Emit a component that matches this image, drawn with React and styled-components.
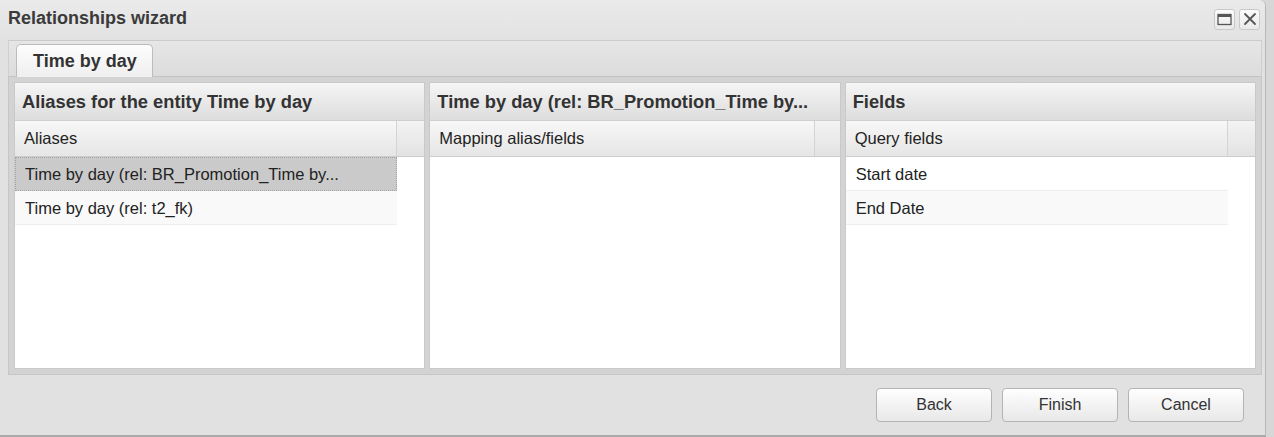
import React from "react";
import styled, { createGlobalStyle } from "styled-components";

const Global = createGlobalStyle`
  html, body { margin: 0; padding: 0; background: #d7d7d7; }
  body { font-family: "Liberation Sans", Arial, sans-serif; }
  * { box-sizing: border-box; }
`;

const Page = styled.div`
  display: flex;
  width: 1274px;
  height: 437px;
  overflow: hidden;
  background: #d7d7d7;
`;

const Window = styled.div`
  width: 1266px;
  height: 437px;
  display: flex;
  flex-direction: column;
  background: #e2e1e2;
  border-right: 1px solid #b7b7b7;
  border-bottom: 2px solid #a9a9a9;
  border-top-right-radius: 6px;
`;

const TitleBar = styled.div`
  height: 40px;
  display: flex;
  align-items: center;
  justify-content: space-between;
  padding: 0 5px 0 8px;
  background: linear-gradient(#eaeaea, #e2e2e2);
  border-top-right-radius: 6px;
`;

const Title = styled.span`
  font-weight: bold;
  font-size: 18px;
  color: #3a3a3a;
  margin-top: -4px;
`;

const Tools = styled.div`
  display: flex;
  gap: 4px;
  margin-top: -2px;
`;

const ToolButton = styled.div`
  width: 21px;
  height: 21px;
  border: 1px solid #c9c9c9;
  border-radius: 3px;
  background: linear-gradient(#fbfbfb, #e9e9e9);
  display: flex;
  align-items: center;
  justify-content: center;
`;

const Body = styled.div`
  display: flex;
  flex-direction: column;
  padding: 0 3px 0 8px;
`;

const TabStrip = styled.div`
  height: 37px;
  display: flex;
  align-items: flex-end;
  padding: 0 0 0 7px;
  border-top: 1px solid #cbcbcb;
  border-left: 1px solid #cfcfcf;
  border-right: 1px solid #cfcfcf;
  border-bottom: 1px solid #c4c4c4;
  background: linear-gradient(#e6e6e6, #dcdcdc);
`;

const Tab = styled.div`
  height: 33px;
  margin-bottom: -1px;
  padding: 0 15px 0 16px;
  display: flex;
  align-items: center;
  border: 1px solid #bcbcbc;
  border-bottom: none;
  border-radius: 5px 5px 0 0;
  background: linear-gradient(#fdfdfd, #efefef);
  font-weight: bold;
  font-size: 18px;
  color: #333;
`;

const Frame = styled.div`
  height: 298px;
  display: flex;
  gap: 4px;
  padding: 5px 5px 5px 5px;
  background: #d3d3d3;
  border: 1px solid #c6c6c6;
  border-top: none;
`;

const Panel = styled.div`
  flex: 1;
  min-width: 0;
  display: flex;
  flex-direction: column;
  background: #fff;
  border: 1px solid #c9c9c9;
`;

const PanelHeader = styled.div`
  height: 38px;
  flex: none;
  display: flex;
  align-items: center;
  padding: 0 7px;
  background: linear-gradient(#f5f5f5, #dddddd);
  border-bottom: 1px solid #cfcfcf;
  font-weight: bold;
  font-size: 18.3px;
  color: #333;
  white-space: nowrap;
  overflow: hidden;
`;

const Grid = styled.div`
  flex: 1;
  display: flex;
  flex-direction: column;
`;

const ColumnHeader = styled.div`
  height: 36px;
  flex: none;
  display: flex;
  background: linear-gradient(#f7f7f7, #e6e6e6);
  border-bottom: 1px solid #cccccc;
`;

const HeaderCell = styled.div`
  flex: 1;
  display: flex;
  align-items: center;
  padding: 0 9px;
  font-size: 16.5px;
  color: #222;
  border-right: 1px solid #d4d4d4;
`;

const Filler = styled.div`
  width: ${(p) => p.$w}px;
  flex: none;
  background: linear-gradient(#f3f3f3, #e3e3e3);
`;

const Rows = styled.div`
  display: flex;
  flex-direction: column;
  padding-right: ${(p) => p.$w}px;
`;

const Row = styled.div`
  height: 34px;
  display: flex;
  align-items: center;
  padding: 0 9px;
  font-size: 16.5px;
  color: #222;
  white-space: nowrap;
  background: ${(p) => (p.$selected ? "#cacaca" : p.$alt ? "#f9f9fa" : "#fff")};
  border: 1px ${(p) => (p.$selected ? "dotted #a4a4a4" : "solid transparent")};
  border-bottom: 1px ${(p) => (p.$selected ? "dotted #a4a4a4" : "solid #ececec")};
`;

const Footer = styled.div`
  flex: 1;
  display: flex;
  align-items: center;
  justify-content: flex-end;
  gap: 10px;
  padding: 0 21px 1px 0;
`;

const Button = styled.button`
  width: 116px;
  height: 34px;
  border: 1px solid #b4b4b4;
  border-radius: 4px;
  background: linear-gradient(#fefefe, #e8e8e8);
  box-shadow: inset 0 1px 0 #fff;
  font-family: "Liberation Sans", Arial, sans-serif;
  font-size: 16px;
  color: #333;
  padding: 0;
`;

const MaxIcon = () => (
  <svg width="15" height="13" viewBox="0 0 15 13">
    <rect x="1" y="1.5" width="13" height="10" fill="none" stroke="#555" strokeWidth="1.3" />
    <rect x="1" y="1" width="13" height="3" fill="#555" />
  </svg>
);

const CloseIcon = () => (
  <svg width="14" height="14" viewBox="0 0 14 14">
    <path d="M2 2 L12 12 M12 2 L2 12" stroke="#555" strokeWidth="1.8" strokeLinecap="round" />
  </svg>
);

const panels = [
  {
    title: "Aliases for the entity Time by day",
    column: "Aliases",
    filler: 27,
    rows: [
      { text: "Time by day (rel: BR_Promotion_Time by...", selected: true },
      { text: "Time by day (rel: t2_fk)", alt: true },
    ],
  },
  {
    title: "Time by day (rel: BR_Promotion_Time by...",
    column: "Mapping alias/fields",
    filler: 25,
    rows: [],
  },
  {
    title: "Fields",
    column: "Query fields",
    filler: 27,
    rows: [{ text: "Start date" }, { text: "End Date", alt: true }],
  },
];

export default function App() {
  return (
    <>
      <Global />
      <Page>
        <Window>
          <TitleBar>
            <Title>Relationships wizard</Title>
            <Tools>
              <ToolButton>
                <MaxIcon />
              </ToolButton>
              <ToolButton>
                <CloseIcon />
              </ToolButton>
            </Tools>
          </TitleBar>
          <Body>
            <TabStrip>
              <Tab>Time by day</Tab>
            </TabStrip>
            <Frame>
              {panels.map((p) => (
                <Panel key={p.title}>
                  <PanelHeader>{p.title}</PanelHeader>
                  <Grid>
                    <ColumnHeader>
                      <HeaderCell>{p.column}</HeaderCell>
                      <Filler $w={p.filler} />
                    </ColumnHeader>
                    <Rows $w={p.filler}>
                      {p.rows.map((r) => (
                        <Row key={r.text} $selected={r.selected} $alt={r.alt}>
                          {r.text}
                        </Row>
                      ))}
                    </Rows>
                  </Grid>
                </Panel>
              ))}
            </Frame>
          </Body>
          <Footer>
            <Button>Back</Button>
            <Button>Finish</Button>
            <Button>Cancel</Button>
          </Footer>
        </Window>
      </Page>
    </>
  );
}
